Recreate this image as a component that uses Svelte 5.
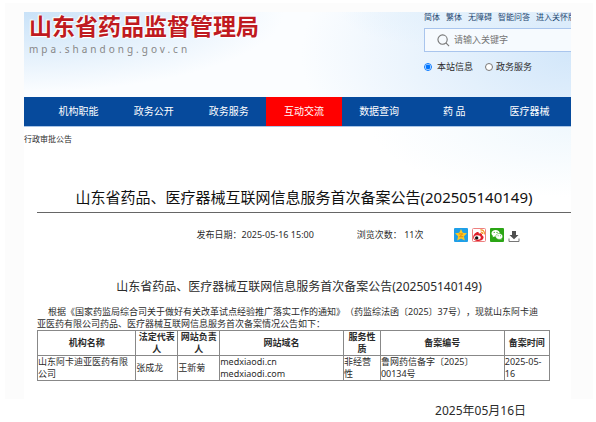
<script lang="ts">
    const quickLinks = ['简体', '繁体', '无障碍', '智能问答', '进入关怀版'];
    const navItems = ['机构职能', '政务公开', '政务服务', '互动交流', '数据查询', '药 品', '医疗器械'];
    const columns = [
        { key: 'org', label: '机构名称' },
        { key: 'legal', label: '法定代表人' },
        { key: 'manager', label: '网站负责人' },
        { key: 'domain', label: '网站域名' },
        { key: 'nature', label: '服务性质' },
        { key: 'number', label: '备案编号' },
        { key: 'date', label: '备案时间' },
    ];
    const records = [
        {
            org: ['山东阿卡迪亚医药有限公司'],
            legal: ['张成龙'],
            manager: ['王新菊'],
            domain: ['medxiaodi.cn', 'medxiaodi.com'],
            nature: ['非经营性'],
            number: ['鲁网药信备字〔2025〕', '00134号'],
            date: ['2025-05-', '16'],
        },
    ];
    const title = '山东省药品、医疗器械互联网信息服务首次备案公告(202505140149)';

    let activeNav = $state('互动交流');
    let scope = $state('site');
    let keyword = $state('');
</script>

<div class="page" lang="zh-CN">
    <div class="sheet">
        <div class="content">
            <header>
                <div class="brand">
                    <div class="site-name">山东省药品监督管理局</div>
                    <div class="site-url">mpa.shandong.gov.cn</div>
                </div>
                <div class="tools">
                    <div class="quick">
                        {#each quickLinks as link}
                            <a href="#top">{link}</a>
                        {/each}
                    </div>
                    <form class="search">
                        <svg viewBox="0 0 14 14" aria-hidden="true">
                            <circle cx="6" cy="6" r="5" />
                            <path d="M9.6 9.6 13 13" />
                        </svg>
                        <input type="text" placeholder="请输入关键字" aria-label="请输入关键字" bind:value={keyword} />
                    </form>
                    <div class="scopes">
                        <label><input type="radio" name="scope" value="site" bind:group={scope} />本站信息</label>
                        <label class="tight"><input type="radio" name="scope" value="service" bind:group={scope} />政务服务</label>
                    </div>
                </div>
            </header>

            <nav>
                {#each navItems as item}
                    <a href="#nav" class:active={item === activeNav} onclick={() => (activeNav = item)}>{item}</a>
                {/each}
            </nav>

            <main>
                <div class="crumb">行政审批公告</div>
                <article>
                    <h1>{title}</h1>
                    <div class="meta">
                        <span>发布日期：2025-05-16 15:00</span>
                        <span>浏览次数： 11次</span>
                        <div class="share">
                            <a href="#qzone" aria-label="QQ空间">
                                <svg viewBox="0 0 14 14">
                                    <rect width="14" height="14" rx="1" fill="#1e9fe8" />
                                    <path d="M7 1 8.800 4.800l4.200.5-3.100 2.900.9 4.300L7 10.400l-3.800 2.100.9-4.300L1 5.300l4.200-.5z" fill="#fdc822" />
                                    <path d="M4.800 5.900h3.900L5.500 8.700h3.800" fill="none" stroke="#e58a12" stroke-width="1" />
                                </svg>
                            </a>
                            <a href="#weibo" aria-label="微博">
                                <svg viewBox="0 0 14 14">
                                    <rect x=".5" y=".5" width="13" height="13" rx="1" fill="#fff" stroke="#ee8080" />
                                    <path d="M1.200 9C1.300 6.300 4.500 3.400 6.200 4c.9.3.6 1.700.6 1.700s2.500-1 3.100.2c.3.7-.1 1.400-.1 1.400s2 .5 1.800 2.200c-.3 2.400-3.200 3.500-5.600 3.500S1.100 11.600 1.200 9z" fill="#e0202b" />
                                    <ellipse cx="5.400" cy="9.500" rx="3.300" ry="2.200" fill="#fff" />
                                    <circle cx="4.700" cy="9.900" r="1.700" fill="#111" />
                                    <path d="M8.400 1.900c2.600-.3 4.400 1.700 3.900 4.400M8.600 4c1.300-.1 2.100.8 1.900 2" fill="none" stroke="#f5941e" stroke-width="1.200" />
                                </svg>
                            </a>
                            <a href="#wechat" aria-label="微信">
                                <svg viewBox="0 0 14 14">
                                    <rect width="14" height="14" rx="1" fill="#2ba515" />
                                    <path d="M5.600 2C3.200 2 1.500 3.500 1.500 5.300c0 1.100.6 2 1.500 2.600l-.4 1.400 1.600-.8 1.400.2c2.400 0 4.100-1.500 4.100-3.400S8 2 5.600 2z" fill="#fff" />
                                    <path d="M9.200 5.500c-2 0-3.500 1.300-3.500 3s1.500 2.900 3.500 2.900l1.200-.2 1.400.8-.4-1.300c.8-.5 1.300-1.300 1.300-2.200 0-1.700-1.500-3-3.500-3z" fill="#fff" stroke="#2ba515" stroke-width=".5" />
                                    <g fill="#2ba515">
                                        <circle cx="4.200" cy="4.400" r=".6" />
                                        <circle cx="7" cy="4.400" r=".6" />
                                        <circle cx="8.100" cy="7.800" r=".5" />
                                        <circle cx="10.400" cy="7.800" r=".5" />
                                    </g>
                                </svg>
                            </a>
                            <a href="#download" aria-label="下载">
                                <svg class="download" viewBox="0 0 12 14">
                                    <path d="M4 3h4v4h2.500L6 11.200 1.500 7H4z" fill="#505050" />
                                    <path d="M1 10.500v3h10v-3" fill="none" stroke="#777" />
                                </svg>
                            </a>
                        </div>
                    </div>

                    <h2>{title}</h2>
                    <p>
                        根据《国家药监局综合司关于做好有关改革试点经验推广落实工作的通知》（药监综法函〔2025〕37号），现就山东阿卡迪<br
                        />亚医药有限公司药品、医疗器械互联网信息服务首次备案情况公告如下：
                    </p>
                    <table>
                        <thead>
                            <tr>
                                {#each columns as col}
                                    <th class={col.key}>{col.label}</th>
                                {/each}
                            </tr>
                        </thead>
                        <tbody>
                            {#each records as record}
                                <tr>
                                    {#each columns as col}
                                        <td>
                                            {#each record[col.key] as line, i}
                                                {#if i > 0}<br />{/if}{line}
                                            {/each}
                                        </td>
                                    {/each}
                                </tr>
                            {/each}
                        </tbody>
                    </table>
                </article>
            </main>
        </div>
    </div>
    <footer>2025年05月16日</footer>
</div>

<style>
    :global(body) {
        margin: 0;
        background: #fff;
    }

    .page {
        font-family: "Noto Sans", "Noto Sans CJK SC", sans-serif;
        font-size: 9px;
        line-height: 12px;
        color: #2b2b2b;
        text-spacing-trim: space-all;
        overflow: hidden;
    }

    a {
        color: inherit;
        text-decoration: none;
    }

    .sheet {
        margin: 3px 3px 0 5px;
        padding: 9px 22px 0 19px;
        background: #fcfcfc;
    }

    .content {
        background:
            radial-gradient(ellipse 200px 70px at 100% 115px, #f0f8fd, transparent),
            #fff;
        padding-bottom: 18px;
    }

    header {
        display: flex;
        justify-content: space-between;
        height: 85px;
        background:
            radial-gradient(ellipse 260px 80px at 0 0, #c9e2f8, transparent),
            radial-gradient(ellipse 110px 35px at 78% 0, #e2f0fc, transparent),
            radial-gradient(ellipse 270px 150px at 100% 50%, #d3e7fa, transparent),
            #fbfdff;
    }

    .brand {
        padding-left: 5px;
    }

    .site-name {
        font-size: 23px;
        line-height: 28px;
        font-weight: 700;
        color: #bf1a20;
        text-shadow: 0 0 2px #fff, 1px 1px 1px #fff, -1px -1px 1px #fff;
    }

    .site-url {
        font-size: 10px;
        line-height: 18px;
        letter-spacing: 3px;
        color: #888;
    }

    .tools {
        width: 147px;
        flex: none;
        overflow: hidden;
    }

    .quick {
        display: flex;
        gap: 6px;
        height: 16px;
        font-size: 8px;
        line-height: 10px;
        color: #24466f;
        white-space: nowrap;
    }

    .search {
        display: flex;
        align-items: center;
        gap: 4px;
        height: 22px;
        padding-left: 12px;
        border: 1px solid #a9c5ed;
        border-right: 0;
        background: #f6fafe;
    }

    .search svg {
        width: 13px;
        height: 13px;
        flex: none;
        fill: none;
        stroke: #777;
        stroke-width: 1.2;
    }

    .search input {
        flex: 1;
        min-width: 0;
        padding: 0;
        border: 0;
        outline: 0;
        background: none;
        font: inherit;
    }

    .search input::placeholder {
        color: #757575;
    }

    .scopes {
        display: flex;
        gap: 12px;
        padding-top: 9px;
    }

    .scopes label {
        display: flex;
        align-items: center;
        gap: 5px;
    }

    .scopes .tight {
        gap: 3px;
    }

    .scopes input {
        width: 8px;
        height: 8px;
        margin: 0;
    }

    nav {
        display: flex;
        padding: 0 4px 0 17px;
        background: #064a9c;
        border-bottom: 1px solid #a9c5e6;
    }

    nav a {
        flex: 1;
        text-align: center;
        font-size: 10px;
        line-height: 29px;
        color: #fff;
    }

    nav a.active {
        background: #f00;
    }

    .crumb {
        padding-top: 6px;
        font-size: 8px;
    }

    article {
        padding-left: 13px;
    }

    h1 {
        margin: 42px 0 0;
        padding-bottom: 5px;
        border-bottom: 1px solid #666;
        font-size: 15px;
        line-height: 20px;
        font-weight: 400;
        text-align: center;
        color: #111;
    }

    .meta {
        display: flex;
        align-items: center;
        justify-content: center;
        gap: 43px;
        height: 20px;
        padding: 12px 0 0 109px;
    }

    .share {
        display: flex;
        gap: 4px;
        margin-left: -12px;
    }

    .share svg {
        display: block;
        width: 14px;
        height: 14px;
    }

    .share .download {
        width: 12px;
    }

    h2 {
        margin: 33px 10px 0 0;
        font-size: 12px;
        line-height: 18px;
        font-weight: 400;
        text-align: center;
    }

    p {
        margin: 10px 0 0;
        text-indent: 11px;
        white-space: nowrap;
    }

    table {
        width: calc(100% - 21px);
        table-layout: fixed;
        border-collapse: collapse;
    }

    th,
    td {
        padding: 0;
        border: 1px solid #888;
        text-align: left;
        word-break: break-all;
    }

    th {
        text-align: center;
        font-weight: 700;
    }

    .org {
        width: 19%;
    }

    .legal,
    .manager {
        width: 8%;
    }

    .domain,
    .number {
        width: 24%;
    }

    .nature {
        width: 7%;
    }

    footer {
        padding: 3px 70px 0 0;
        font-size: 12px;
        line-height: 18px;
        text-align: right;
    }
</style>
